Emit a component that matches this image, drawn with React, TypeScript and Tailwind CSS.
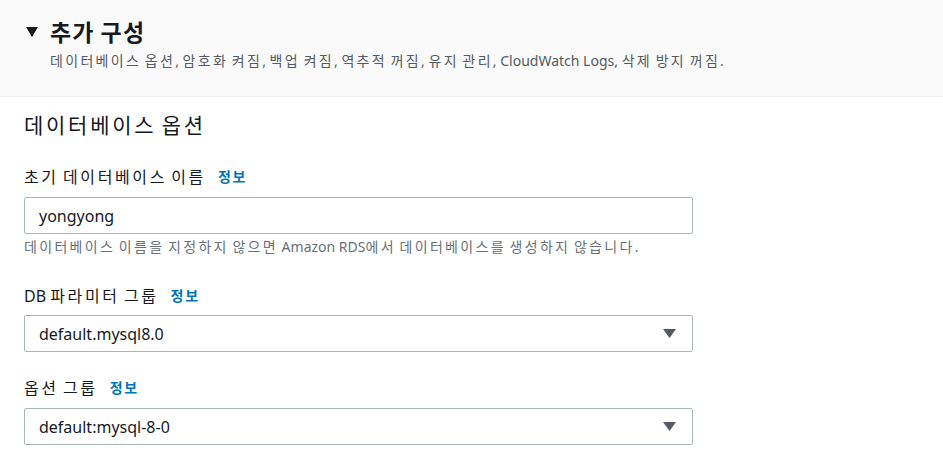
// hangul in the reference is set wider than Noto CJK's default advance
function K({ text, track = 'tracking-[0.165em]' }: { text: string; track?: string }) {
  const parts = text.split(/([\uAC00-\uD7A3]+)/)
  return (
    <>
      {parts.map((p, i) =>
        /[\uAC00-\uD7A3]/.test(p) ? (
          <span key={i} className={track}>
            {p}
          </span>
        ) : (
          <span key={i}>{p}</span>
        )
      )}
    </>
  )
}

function InfoLink() {
  return (
    <span className="ml-[12px] text-[14px] font-bold text-[#0073bb]">
      <K text="정보" track="tracking-[0.12em]" />
    </span>
  )
}

function Caret() {
  return (
    <svg width="13" height="9" viewBox="0 0 13 9" className="shrink-0">
      <path d="M0 0h13L6.5 9z" fill="#545b64" />
    </svg>
  )
}

function SelectBox({ value }: { value: string }) {
  return (
    <div className="flex h-[37px] w-[669px] items-center justify-between rounded-[2px] border border-[#aab7b8] bg-white pl-[14px] pr-[16px] text-[16px] text-[#16191f]">
      <span>{value}</span>
      <Caret />
    </div>
  )
}

export default function App() {
  return (
    <div
      className="h-[459px] w-[943px] overflow-hidden bg-white text-[#16191f]"
      style={{ fontFamily: '"Noto Sans", "Noto Sans CJK KR", sans-serif' }}
    >
      <div className="h-[97px] border-b border-[#eaeded] bg-[#fafafa] pl-[26px] pt-[16px]">
        <div className="flex items-center">
          <svg width="12" height="10" viewBox="0 0 12 10" className="mr-[12px]">
            <path d="M0 0h12L6 10z" fill="#16191f" />
          </svg>
          <span className="text-[23px] font-bold leading-[32px]">
            <K text="추가 구성" track="tracking-[0.05em]" />
          </span>
        </div>
        <div className="ml-[24px] mt-[3px] text-[14px] leading-[20px] text-[#545b64]">
          <K text="데이터베이스 옵션, 암호화 켜짐, 백업 켜짐, 역추적 꺼짐, 유지 관리, CloudWatch Logs, 삭제 방지 꺼짐." />
        </div>
      </div>

      <div className="pl-[24px] pt-[12px]">
        <div className="text-[21px] leading-[32px]">
          <K text="데이터베이스 옵션" track="tracking-[0.13em]" />
        </div>

        <div className="mt-[25px] flex items-center text-[16px] leading-[22px]">
          <span>
            <K text="초기 데이터베이스 이름" />
          </span>
          <InfoLink />
        </div>
        <div className="mt-[9px] flex h-[37px] w-[669px] items-center rounded-[2px] border border-[#aab7b8] bg-white pl-[14px] text-[16px]">
          yongyong
        </div>
        <div className="mt-[3px] text-[14px] leading-[20px] text-[#687078]">
          <K text="데이터베이스 이름을 지정하지 않으면 Amazon RDS에서 데이터베이스를 생성하지 않습니다." />
        </div>

        <div className="mt-[28px] flex items-center text-[16px] leading-[22px]">
          <span>
            <K text="DB 파라미터 그룹" />
          </span>
          <InfoLink />
        </div>
        <div className="mt-[8px]">
          <SelectBox value="default.mysql8.0" />
        </div>

        <div className="mt-[25px] flex items-center text-[16px] leading-[22px]">
          <span>
            <K text="옵션 그룹" />
          </span>
          <InfoLink />
        </div>
        <div className="mt-[9px]">
          <SelectBox value="default:mysql-8-0" />
        </div>
      </div>
    </div>
  )
}
